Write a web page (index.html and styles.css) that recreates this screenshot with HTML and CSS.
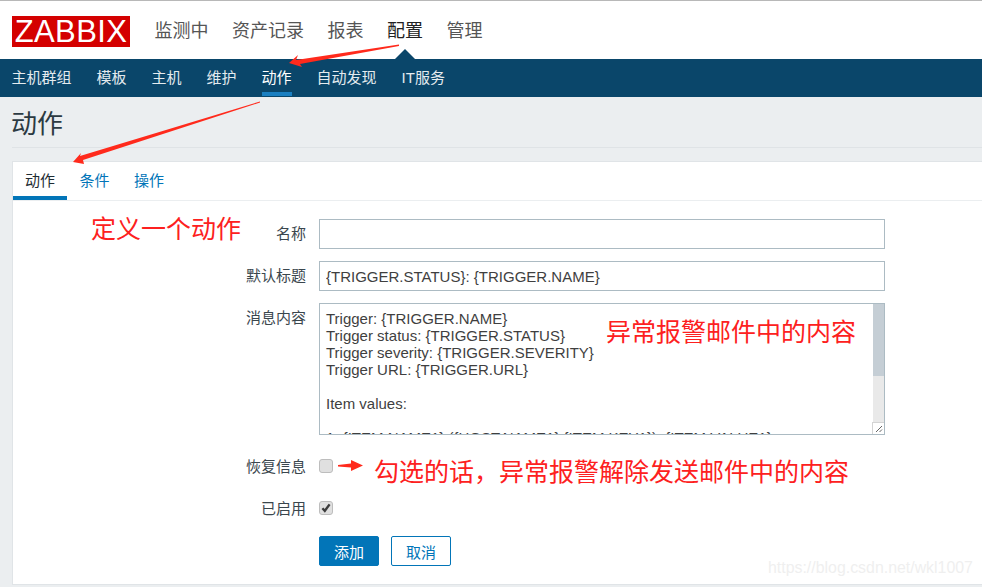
FILE: index.html
```html
<!DOCTYPE html>
<html lang="zh-CN">
<head>
  <meta charset="UTF-8">
  <meta name="viewport" content="width=device-width, initial-scale=1.0">
  <title>动作</title>
  <link rel="stylesheet" href="styles.css">
</head>
<body>
  <header class="top">
    <div class="logo">ZABBIX</div>
    <nav class="main-nav">
      <a>监测中</a>
      <a>资产记录</a>
      <a>报表</a>
      <a class="current">配置</a>
      <a>管理</a>
    </nav>
  </header>

  <nav class="sub-nav">
    <a>主机群组</a>
    <a>模板</a>
    <a>主机</a>
    <a>维护</a>
    <a class="current">动作</a>
    <a>自动发现</a>
    <a>IT服务</a>
  </nav>

  <main class="page">
    <h1>动作</h1>

    <section class="card">
      <div class="tabs">
        <a class="current">动作</a>
        <a>条件</a>
        <a>操作</a>
      </div>

      <form class="form">
        <label>名称</label>
        <input class="field" type="text">

        <label>默认标题</label>
        <input class="field" type="text" value="{TRIGGER.STATUS}: {TRIGGER.NAME}">

        <label>消息内容</label>
        <div class="message-box">
          <textarea class="field message" spellcheck="false">Trigger: {TRIGGER.NAME}
Trigger status: {TRIGGER.STATUS}
Trigger severity: {TRIGGER.SEVERITY}
Trigger URL: {TRIGGER.URL}

Item values:

1. {ITEM.NAME1} ({HOST.NAME1}:{ITEM.KEY1}): {ITEM.VALUE1}
2. {ITEM.NAME2} ({HOST.NAME2}:{ITEM.KEY2}): {ITEM.VALUE2}
3. {ITEM.NAME3} ({HOST.NAME3}:{ITEM.KEY3}): {ITEM.VALUE3}

Original event ID: {EVENT.ID}</textarea>
          <div class="scrollbar"><div class="thumb"></div></div>
          <div class="grip">
            <svg viewBox="0 0 12 12" width="12" height="12"><path d="M4 10 10 4M7.5 10 10 7.5" fill="none" stroke="#666" stroke-width="1"/></svg>
          </div>
        </div>

        <label class="check-label">恢复信息</label>
        <span class="check"></span>

        <label class="check-label enabled">已启用</label>
        <span class="check enabled">
          <svg viewBox="0 0 14 14" width="14" height="14"><path d="M3.4 7.2 5.8 9.8 10.6 3.4" fill="none" stroke="#3c3c3c" stroke-width="2.4"/></svg>
        </span>

        <div class="buttons">
          <button type="button" class="btn primary">添加</button>
          <button type="button" class="btn">取消</button>
        </div>
      </form>
    </section>
  </main>

  <!-- red notes drawn on top of the screenshot -->
  <div class="note note-define">定义一个动作</div>
  <div class="note note-message">异常报警邮件中的内容</div>
  <div class="note note-recover">勾选的话，异常报警解除发送邮件中的内容</div>
  <svg class="arrows" viewBox="0 0 982 587" width="982" height="587">
    <polygon points="399,44.5 296,60 298,55 289,63 302,67 300,64 399,46"/>
    <polygon points="260,101.5 80,156 81,153 73,162 84,164 83,160 260,102.5"/>
    <polygon points="338,465 351,463.5 351,460 363,465.5 351,471 351,467.5 338,466.5"/>
  </svg>
  <div class="watermark">https://blog.csdn.net/wkl1007</div>
</body>
</html>
```

FILE: styles.css
```css
* {
  box-sizing: border-box;
}
html, body {
  height: 100%;
}
body {
  margin: 0;
  overflow: hidden;
  position: relative;
  background-color: #ebeef0;
  font-family: "Liberation Sans", "Noto Sans CJK SC", sans-serif;
  font-size: 15px;
  color: #1f2c33;
}

/* top bar */
.top {
  height: 59px;
  padding: 15px 12px 0;
  display: flex;
  align-items: flex-start;
  background-color: #fff;
  border-top: 1px solid #b8b8b8;
}
.logo {
  width: 118px;
  height: 31px;
  background-color: #d40000;
  color: #fff;
  font-size: 31px;
  line-height: 31px;
  letter-spacing: 0.4px;
  text-align: center;
}
.main-nav {
  margin-left: 24.5px;
  display: flex;
  gap: 23.5px;
  font-size: 18px;
  line-height: 30px;
  color: #555;
}
.main-nav .current {
  position: relative;
  color: #222;
}
.main-nav .current::after {
  content: "";
  position: absolute;
  left: 8px;
  top: 33px;
  border: 10px solid transparent;
  border-top: 0;
  border-bottom-color: #0a466a;
}

/* second level menu */
.sub-nav {
  height: 38px;
  padding-left: 11.5px;
  display: flex;
  gap: 25px;
  background-color: #0a466a;
  color: #e4ebef;
  line-height: 37px;
}
.sub-nav a {
  height: 37px;
}
.sub-nav .current {
  color: #fff;
  border-bottom: 4px solid #1a7fc1;
}

.page {
  padding: 0 0 0 12px;
}
h1 {
  margin: 0 0 13px;
  height: 51px;
  font-size: 26px;
  font-weight: normal;
  line-height: 55px;
  text-indent: -1px;
  color: #2c3a42;
  border-bottom: 1px solid #dfe3e6;
}

/* card */
.card {
  height: 424px;
  background-color: #fff;
  border: 1px solid #e0e4e7;
  border-right: 0;
}
.tabs {
  height: 39px;
  display: flex;
  gap: 0.5px;
  border-bottom: 1px solid #ebeef0;
  color: #0275b8;
}
.tabs a {
  padding: 0 12px;
  line-height: 37px;
}
.tabs .current {
  width: 54px;
  color: #1f2c33;
  border-bottom: 4px solid #0275b8;
}

/* form */
.form {
  padding: 18px 0 0;
  display: grid;
  grid-template-columns: 293px 566px;
  column-gap: 13px;
  row-gap: 12px;
  align-items: start;
}
.form label {
  text-align: right;
  line-height: 30px;
  color: #3a464d;
}
.field {
  width: 566px;
  height: 30px;
  padding: 0 6px;
  display: block;
  border: 1px solid #acbbc3;
  background-color: #fff;
  font-family: inherit;
  font-size: 15px;
  color: #3f3f3f;
  outline: none;
}
.message-box {
  position: relative;
  height: 132px;
}
.message {
  height: 132px;
  padding: 6px 18px 6px 6px;
  line-height: 17px;
  overflow: hidden;
  resize: none;
}
.scrollbar {
  position: absolute;
  right: 1px;
  top: 1px;
  bottom: 1px;
  width: 11px;
  background-color: #e9e9e9;
}
.thumb {
  height: 72px;
  background-color: #c5ced5;
}
.grip {
  position: absolute;
  right: 1px;
  bottom: 1px;
  width: 12px;
  height: 12px;
  background-color: #fff;
  border: 1px solid #d4d4d4;
  border-width: 1px 0 0 1px;
}
.grip svg {
  display: block;
  margin: -1px 0 0 -1px;
}
.form .check-label {
  height: 14px;
  margin-top: 12px;
  line-height: 16px;
}
.check {
  width: 14px;
  height: 14px;
  margin-top: 12px;
  display: block;
  background-color: #e0e0e0;
  border: 1px solid #bdbdbd;
  border-radius: 3px;
}
.check svg {
  display: block;
  margin: -1px;
}
.form .enabled {
  margin-top: 16px;
}
.buttons {
  grid-column: 2;
  margin-top: 9px;
  display: flex;
  gap: 12px;
}
.btn {
  width: 60px;
  height: 30px;
  padding: 0;
  background-color: #fff;
  border: 1px solid #0275b8;
  border-radius: 2px;
  font-family: inherit;
  font-size: 15px;
  color: #0275b8;
}
.primary {
  background-color: #0275b8;
  color: #fff;
}

/* overlays */
.note {
  position: absolute;
  font-size: 25px;
  line-height: 30px;
  color: #fd2020;
  white-space: nowrap;
}
.note-define {
  left: 91px;
  top: 214px;
}
.note-message {
  left: 606px;
  top: 317px;
}
.note-recover {
  left: 374px;
  top: 457px;
}
.arrows {
  position: absolute;
  left: 0;
  top: 0;
  fill: #ff2a1c;
  pointer-events: none;
}
.watermark {
  position: absolute;
  left: 768px;
  top: 558px;
  font-size: 15.9px;
  line-height: 20px;
  color: #efefef;
}
```
